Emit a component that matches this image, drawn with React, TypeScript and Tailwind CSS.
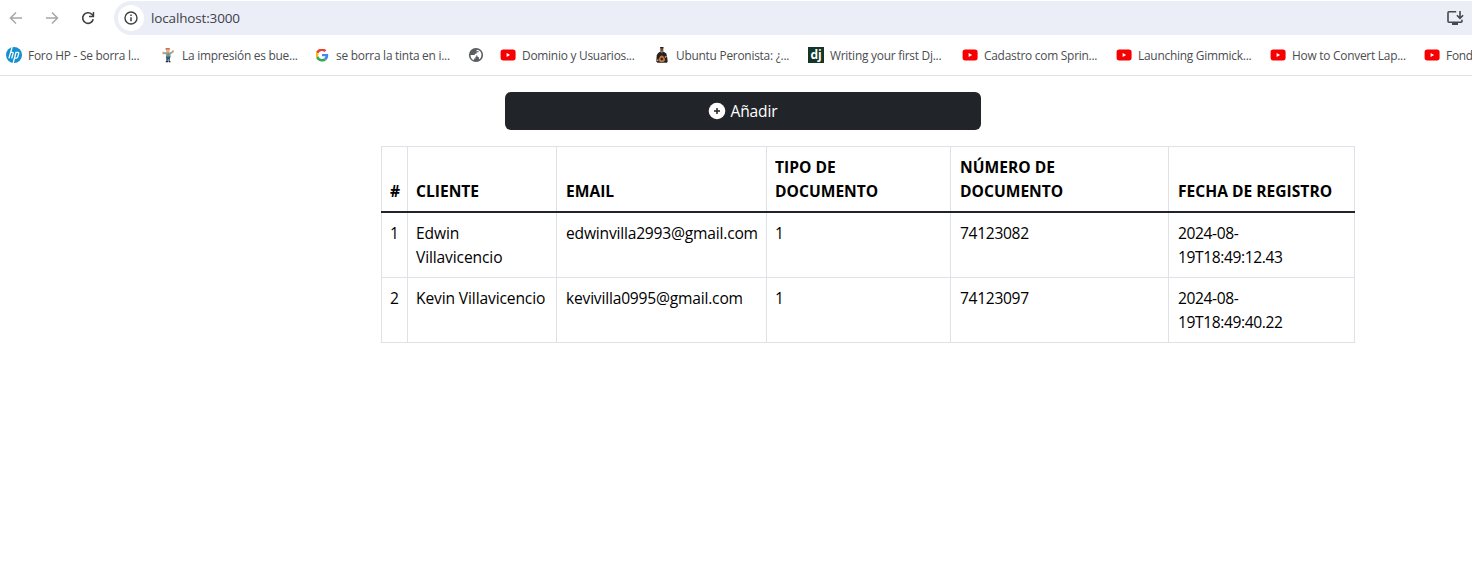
import { Fragment, type ReactNode } from "react";

const YouTube = () => (
  <svg viewBox="0 0 16 16" className="size-4">
    <rect x="0.6" y="2.4" width="15" height="11" rx="2.6" fill="#f60002" />
    <path d="M6.6 5.9v4l3.5-2z" fill="#fff" />
  </svg>
);

const Hp = () => (
  <svg viewBox="0 0 16 16" className="size-4">
    <circle cx="8" cy="8" r="8" fill="#1290cf" />
    <g fill="none" stroke="#fff" strokeWidth="1.3">
      <path d="M6.2 0 2.9 11.4M4.7 5.3h1.6q1.1 0 .8 1.1L5.7 11.4" />
      <path d="M10.100 5 7.200 16M9.800 5.300h2q1.200 0 .9 1.100l-1 3.700q-.3 1-1.300 1H8.600" />
    </g>
  </svg>
);

const Technician = () => (
  <svg viewBox="0 0 16 16" className="size-4">
    <path d="M5.6 1.2h4.2v1.5H5.6z" fill="#c0453c" />
    <path d="M6 2.6h3.6v2.6H6z" fill="#e6b48a" />
    <path d="M3 5.2h3l4 .2 3.1-1.6.6 1.3-3 2.2v3.2H6V7.2L2.8 6.8z" fill="#77a9a4" />
    <path d="M2.6 4.8h1.6v2.4H2.6zM12.3 3.3h1.4v2h-1.4z" fill="#e29a58" />
    <path d="M7.5 5.3h1.3v4H7.5z" fill="#d96d4a" />
    <path d="M6 9.5h4.2l-.5 4.8H8.5l-.3-2.8-.5 2.8H6.4z" fill="#36597f" />
    <path d="M6 14h2v1.2H5.6zM8.6 14h1.6l.5 1.2H8.6z" fill="#25282d" />
  </svg>
);

const Google = () => (
  <svg viewBox="0 0 48 48" className="size-4 p-[1.5px]">
    <path fill="#EA4335" d="M24 9.5c3.54 0 6.71 1.22 9.21 3.6l6.85-6.85C35.9 2.38 30.47 0 24 0 14.62 0 6.51 5.38 2.56 13.22l7.98 6.19C12.43 13.72 17.74 9.5 24 9.5z" />
    <path fill="#4285F4" d="M46.98 24.55c0-1.57-.15-3.09-.38-4.55H24v9.02h12.94c-.58 2.96-2.26 5.48-4.78 7.18l7.73 6c4.51-4.18 7.09-10.36 7.09-17.65z" />
    <path fill="#FBBC05" d="M10.53 28.59c-.48-1.45-.76-2.99-.76-4.59s.27-3.14.76-4.59l-7.98-6.19C.92 16.46 0 20.12 0 24c0 3.88.92 7.54 2.56 10.78l7.97-6.19z" />
    <path fill="#34A853" d="M24 48c6.48 0 11.93-2.13 15.89-5.81l-7.73-6c-2.15 1.45-4.92 2.3-8.16 2.3-6.26 0-11.57-4.22-13.47-9.91l-7.98 6.19C6.51 42.62 14.62 48 24 48z" />
  </svg>
);

const Globe = () => (
  <svg viewBox="0 0 16 16" className="size-4">
    <circle cx="8" cy="8" r="7.100" fill="#5a5d61" />
    <path d="M2.500 8h3.700q2.200 0 2.300 1.800H7.400v1.700H6v1.800Q2.700 12.300 2.500 8zM8.600 2.700q4.800.6 4.900 5.300-.1 3-2.500 4.500V10.300H9.900L9.200 8.500H6.800V6.800h1.800V5.300h2.100V4.200H8.600z" fill="#fff" />
  </svg>
);

const Musician = () => (
  <svg viewBox="0 0 16 16" className="size-4">
    <path d="M5.900 4.800h3.900l2.500 1.700.9 4L13.700 15l-1.200.8H3.500L2.300 14.500l.4-6 1-2z" fill="#25211f" />
    <path d="M6.300.7h3v4h-3z" fill="#70503f" />
    <path d="M6.100 0h3.400v1.300H6.100z" fill="#28201c" />
    <path d="M7.200 4.700h1.400l-.7 1.800z" fill="#bda799" />
    <path d="M7.800 8.500q2 0 2.200 2 1.500 1 1 3-.6 1.800-3.200 1.800t-3.200-1.800q-.5-2 1-3 .2-2 2.200-2z" fill="#be7443" />
    <circle cx="7.800" cy="12" r="1.200" fill="#32211a" />
    <path d="m10.500 9.800 1.700-1 .7.900-1.800 1.200zM2.800 12.600h1.500v1.300H2.800z" fill="#d4a184" />
  </svg>
);

const Django = () => (
  <span className="flex size-4 items-center justify-center bg-[#143527] text-[12px] leading-none font-bold text-white">
    <span className="mt-[-1px]">dj</span>
  </span>
);

type Bookmark = { icon: ReactNode; label?: string };

const bookmarks: Bookmark[] = [
  { icon: <Hp />, label: "Foro HP - Se borra l..." },
  { icon: <Technician />, label: "La impresión es bue..." },
  { icon: <Google />, label: "se borra la tinta en i..." },
  { icon: <Globe /> },
  { icon: <YouTube />, label: "Dominio y Usuarios..." },
  { icon: <Musician />, label: "Ubuntu Peronista: ¿..." },
  { icon: <Django />, label: "Writing your first Dj..." },
  { icon: <YouTube />, label: "Cadastro com Sprin..." },
  { icon: <YouTube />, label: "Launching Gimmick..." },
  { icon: <YouTube />, label: "How to Convert Lap..." },
  { icon: <YouTube />, label: "Fond" },
];

const headers = [
  ["#"],
  ["CLIENTE"],
  ["EMAIL"],
  ["TIPO DE", "DOCUMENTO"],
  ["NÚMERO DE", "DOCUMENTO"],
  ["FECHA DE REGISTRO"],
];

const rows = [
  [["1"], ["Edwin", "Villavicencio"], ["edwinvilla2993@gmail.com"], ["1"], ["74123082"], ["2024-08-", "19T18:49:12.43"]],
  [["2"], ["Kevin Villavicencio"], ["kevivilla0995@gmail.com"], ["1"], ["74123097"], ["2024-08-", "19T18:49:40.22"]],
];

const columnPadding = ["pl-2", "pl-2", "pl-[9px]", "pl-2", "pl-[9px]", "pl-[9px]"];
const cellTracking = [
  "tracking-normal",
  "tracking-[-0.13px]",
  "tracking-[-0.2px]",
  "tracking-normal",
  "tracking-[-0.32px]",
  "tracking-[-0.4px]",
];

const Lines = ({ lines }: { lines: string[] }) => (
  <>
    {lines.map((line, i) => (
      <Fragment key={line}>
        {i > 0 && <br />}
        {line}
      </Fragment>
    ))}
  </>
);

function Toolbar() {
  return (
    <div className="flex h-[35px] items-center pt-px">
      <div className="flex w-[114px] shrink-0 items-center gap-5 pl-2">
        <svg viewBox="0 0 16 16" className="size-4" fill="none" stroke="#a5a7aa" strokeWidth="1.5">
          <path d="M14 8H3M8 2.500 2.500 8 8 13.500" />
        </svg>
        <svg viewBox="0 0 16 16" className="size-4" fill="none" stroke="#a5a7aa" strokeWidth="1.5">
          <path d="M2 8h11M8 2.500 13.500 8 8 13.500" />
        </svg>
        <svg viewBox="0 0 16 16" className="size-4" fill="none" stroke="#3c4043" strokeWidth="1.6">
          <path d="M13.200 9.200A5.300 5.300 0 1 1 11.800 4.300L13.500 6" />
          <path d="M14.200 2v5.200H9V5.700h3.700V2z" fill="#3c4043" stroke="none" />
        </svg>
      </div>
      <div className="flex h-[34px] flex-1 items-center rounded-l-full bg-[#ebedf7] pr-2 pl-1">
        <span className="flex size-[26px] items-center justify-center rounded-full bg-white">
          <svg viewBox="0 0 16 16" className="size-4" fill="none" stroke="#3c4043" strokeWidth="1.400">
            <circle cx="8" cy="8" r="6" />
            <path d="M8 7.300v3.900M8 4.600v1.500" strokeWidth="1.500" />
          </svg>
        </span>
        <span className="mt-px ml-[7px] flex-1 text-[13.5px] tracking-[-0.15px] text-[#3f4247] [font-stretch:96%]">
          localhost:3000
        </span>
        <svg viewBox="0 0 18 18" className="size-[18px]" fill="none" stroke="#45484d" strokeWidth="1.600">
          <path d="M10.200 2.800H3Q2 2.800 2 3.800V12.200Q2 13.200 3 13.200H15Q16 13.200 16 12.200v-1.400" />
          <path d="M14 2v7M10.900 6.200 14 9.300l3.100-3.100" />
          <path d="M6 14.900h6" strokeWidth="2.200" />
        </svg>
      </div>
    </div>
  );
}

export default function App() {
  return (
    <div className="h-[572px] w-[1472px] overflow-hidden bg-white font-['Open_Sans',sans-serif]">
      <Toolbar />
      <div className="flex h-[41px] items-center overflow-hidden border-b border-[#dfe1e5] pl-1.5">
        {bookmarks.map((b, i) => (
          <div
            key={i}
            className={
              b.label
                ? "flex w-[154px] shrink-0 items-center gap-1.5 text-[11.9px] leading-4 tracking-[-0.24px] whitespace-nowrap text-[#4b4d51] [font-stretch:94%]"
                : "flex w-8 shrink-0 items-center"
            }
          >
            {b.icon}
            {b.label && <span>{b.label}</span>}
          </div>
        ))}
      </div>
      <main className="pt-4">
        <button className="ml-[505px] flex h-[38px] w-[476px] items-center justify-center gap-1 rounded-md bg-[#212529] text-[15.6px] tracking-[-0.15px] text-white [font-stretch:95%]">
          <svg viewBox="0 0 18 18" className="size-[18px]">
            <circle cx="9" cy="9" r="8.300" fill="#fff" />
            <path d="M9 6v6M6 9h6" stroke="#212529" strokeWidth="1.500" />
          </svg>
          <span className="pt-px">Añadir</span>
        </button>
        <table className="mt-4 ml-[381px] w-[974px] table-fixed border-collapse text-left text-[15.6px] leading-6 text-black [font-stretch:96%]">
          <colgroup>
            <col className="w-[26px]" />
            <col className="w-[149px]" />
            <col className="w-[210px]" />
            <col className="w-[184px]" />
            <col className="w-[218px]" />
            <col />
          </colgroup>
          <thead>
            <tr>
              {headers.map((lines, i) => (
                <th
                  key={i}
                  className={`border border-b-2 border-[#dee2e6] border-b-[#212529] py-2 align-bottom font-bold whitespace-nowrap ${columnPadding[i]}`}
                >
                  <Lines lines={lines} />
                </th>
              ))}
            </tr>
          </thead>
          <tbody>
            {rows.map((row, r) => (
              <tr key={r}>
                {row.map((lines, i) => (
                  <td
                    key={i}
                    className={`h-[65px] border border-[#dee2e6] py-2 align-top whitespace-nowrap ${columnPadding[i]} ${cellTracking[i]}`}
                  >
                    <Lines lines={lines} />
                  </td>
                ))}
              </tr>
            ))}
          </tbody>
        </table>
      </main>
    </div>
  );
}
